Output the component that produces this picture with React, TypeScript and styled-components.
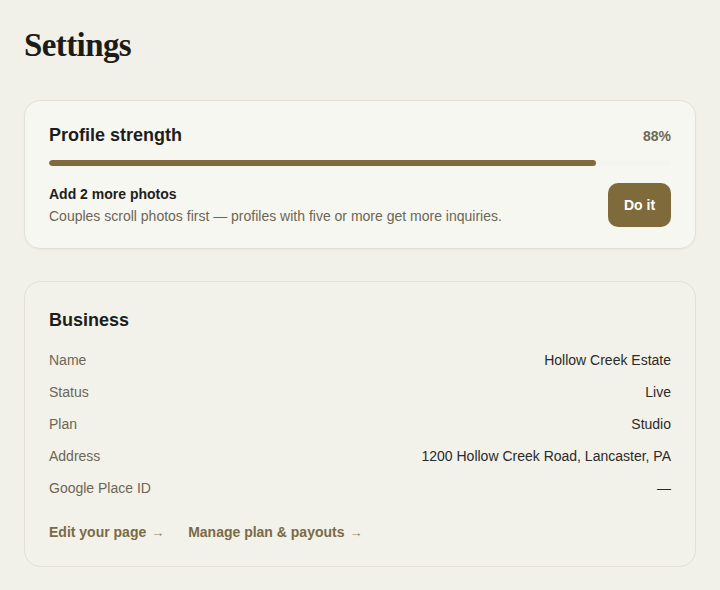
import React from "react";
import styled, { createGlobalStyle } from "styled-components";

const business = [
  { label: "Name", value: "Hollow Creek Estate" },
  { label: "Status", value: "Live" },
  { label: "Plan", value: "Studio" },
  { label: "Address", value: "1200 Hollow Creek Road, Lancaster, PA" },
  { label: "Google Place ID", value: "—" },
];

const strength = 88;

const App: React.FC = () => {
  return (
    <>
      <GlobalStyle />
      <Page>
        <Title>Settings</Title>

        <Card $raised>
          <StrengthHeader>
            <CardTitle>Profile strength</CardTitle>
            <Percent>{strength}%</Percent>
          </StrengthHeader>
          <Track>
            <Fill style={{ width: `${strength}%` }} />
          </Track>
          <TaskRow>
            <div>
              <TaskTitle>Add 2 more photos</TaskTitle>
              <TaskText>
                Couples scroll photos first — profiles with five or more get more inquiries.
              </TaskText>
            </div>
            <ActionButton>Do it</ActionButton>
          </TaskRow>
        </Card>

        <Card>
          <SectionTitle>Business</SectionTitle>
          <InfoList>
            {business.map((row) => (
              <InfoRow key={row.label}>
                <Label>{row.label}</Label>
                <Value>{row.value}</Value>
              </InfoRow>
            ))}
          </InfoList>
          <Links>
            <LinkItem href="#">
              Edit your page <Arrow>→</Arrow>
            </LinkItem>
            <LinkItem href="#">
              Manage plan &amp; payouts <Arrow>→</Arrow>
            </LinkItem>
          </Links>
        </Card>
      </Page>
    </>
  );
};

export default App;

const GlobalStyle = createGlobalStyle`
  html, body {
    margin: 0;
    padding: 0;
    background: #f1f1e9;
  }
  body {
    font-family: "Liberation Sans", Arial, sans-serif;
    color: #1d1d1b;
  }
  * {
    box-sizing: border-box;
  }
`;

const Page = styled.div`
  padding: 26px 24px 24px;
  display: flex;
  flex-direction: column;
  gap: 32px;
`;

const Title = styled.h1`
  margin: 0 0 4px;
  font-family: "Liberation Serif", "DejaVu Serif", serif;
  font-weight: 700;
  font-size: 33px;
  line-height: 38px;
  letter-spacing: -0.6px;
  color: #1c1b17;
`;

const Card = styled.section<{ $raised?: boolean }>`
  background: ${(p) => (p.$raised ? "#f7f7f1" : "#f2f2ea")};
  border: 1px solid #e3e1d6;
  border-radius: 16px;
  padding: ${(p) => (p.$raised ? "24px 24px 21px" : "24px 24px 23px")};
  box-shadow: ${(p) => (p.$raised ? "0 1px 2px rgba(60, 50, 20, 0.04)" : "none")};
`;

const StrengthHeader = styled.div`
  display: flex;
  justify-content: space-between;
  align-items: center;
  height: 20px;
`;

const CardTitle = styled.h2`
  margin: 0;
  font-size: 18px;
  font-weight: 700;
  line-height: 20px;
  color: #1d1d1b;
`;

const Percent = styled.span`
  font-size: 14px;
  font-weight: 700;
  color: #6e6856;
  padding-top: 2px;
`;

const Track = styled.div`
  margin-top: 15px;
  height: 6px;
  border-radius: 3px;
  background: #f5f5ef;
  overflow: hidden;
`;

const Fill = styled.div`
  height: 100%;
  border-radius: 3px;
  background: #7f6b3e;
`;

const TaskRow = styled.div`
  margin-top: 17px;
  display: flex;
  align-items: center;
  justify-content: space-between;
  gap: 16px;
`;

const TaskTitle = styled.div`
  font-size: 14px;
  font-weight: 700;
  line-height: 20px;
  color: #1d1d1b;
  margin-bottom: 2px;
`;

const TaskText = styled.div`
  font-size: 14px;
  line-height: 20px;
  color: #6c6656;
`;

const ActionButton = styled.button`
  flex-shrink: 0;
  width: 63px;
  height: 44px;
  border: none;
  border-radius: 10px;
  background: #7f6a3b;
  color: #ffffff;
  font-family: inherit;
  font-size: 14px;
  font-weight: 700;
  cursor: pointer;
`;

const SectionTitle = styled.h2`
  margin: 0 0 10px;
  font-size: 18px;
  font-weight: 700;
  line-height: 28px;
  color: #1d1d1b;
`;

const InfoList = styled.div`
  display: flex;
  flex-direction: column;
`;

const InfoRow = styled.div`
  display: flex;
  justify-content: space-between;
  align-items: center;
  padding: 6px 0;
  font-size: 14px;
  line-height: 20px;
`;

const Label = styled.span`
  color: #6c6656;
`;

const Value = styled.span`
  color: #2a2a28;
  text-align: right;
`;

const Links = styled.div`
  margin-top: 18px;
  display: flex;
  gap: 24px;
`;

const LinkItem = styled.a`
  font-size: 14px;
  font-weight: 700;
  line-height: 20px;
  color: #7a6a45;
  text-decoration: none;
`;

const Arrow = styled.span`
  font-size: 13px;
  font-weight: 400;
  color: #8a7e64;
  margin-left: 1px;
`;
